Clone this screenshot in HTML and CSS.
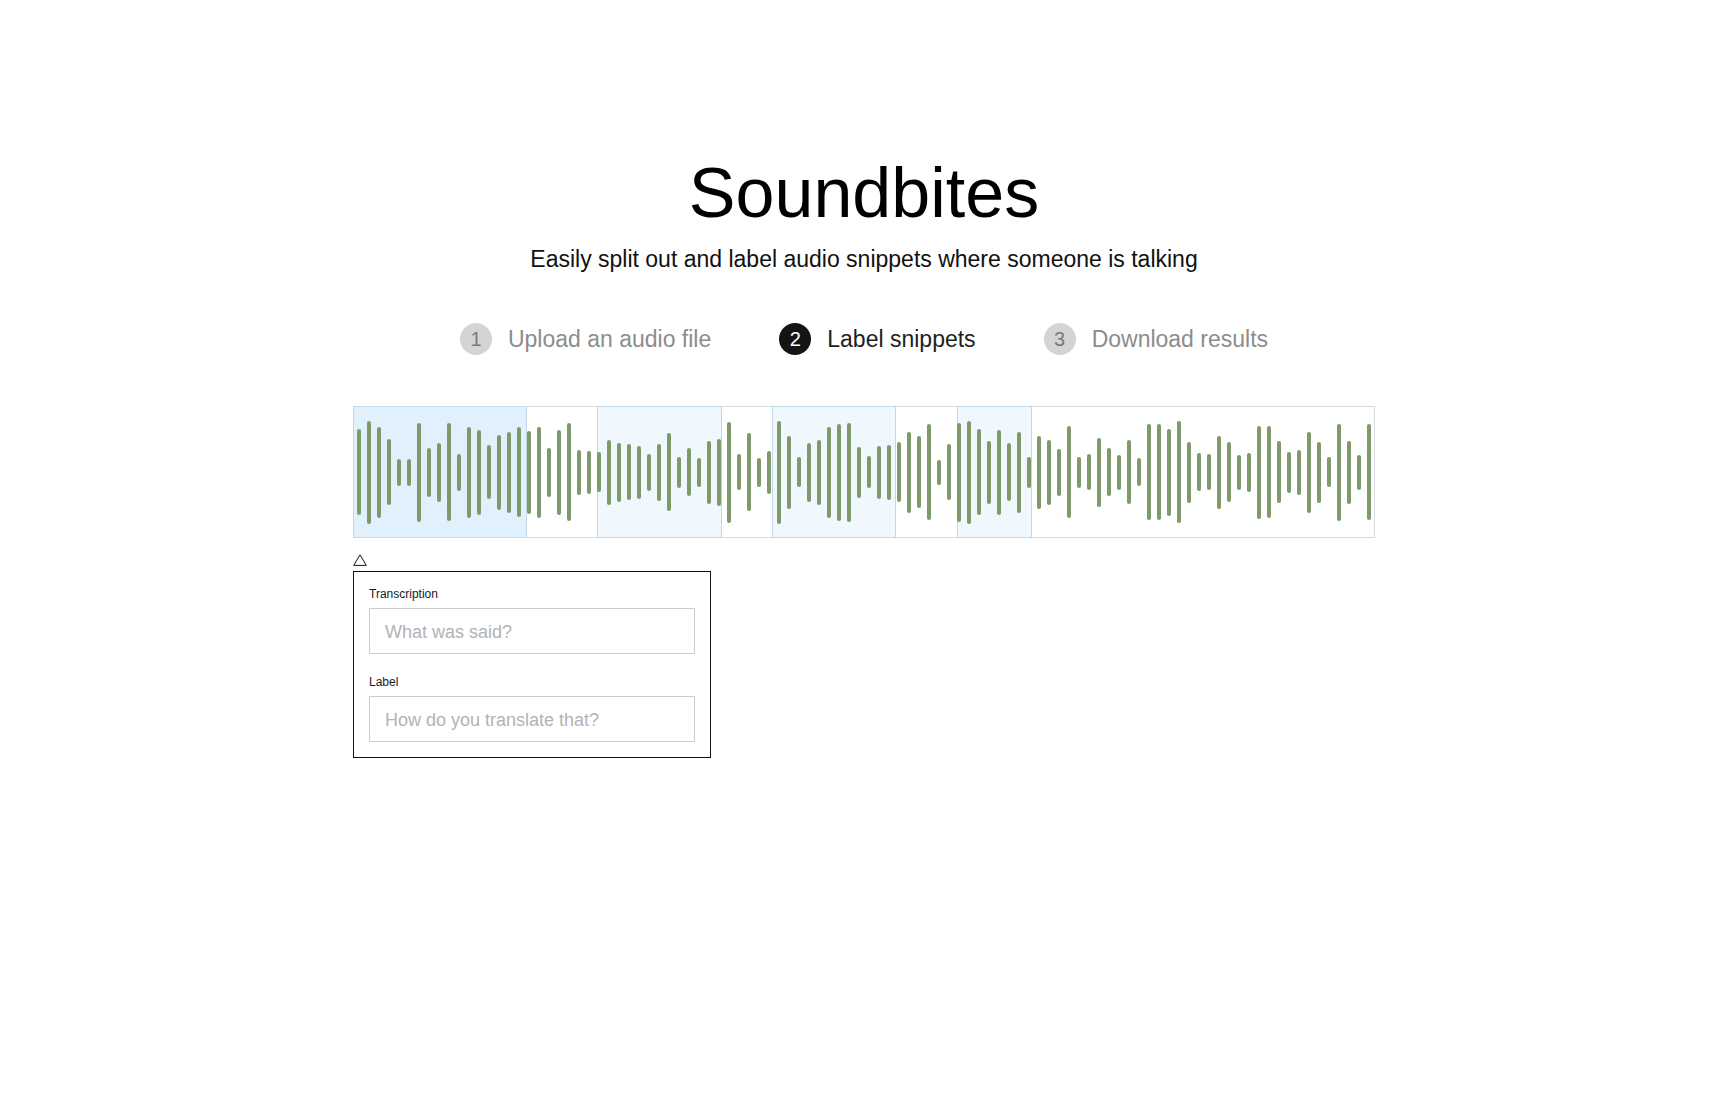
FILE: index.html
```html
<!DOCTYPE html>
<html lang="en">
<head>
<meta charset="utf-8">
<title>Soundbites</title>
<link rel="stylesheet" href="styles.css">
</head>
<body>
<main class="page">
  <header class="hero">
    <h1 class="title">Soundbites</h1>
    <p class="subtitle">Easily split out and label audio snippets where someone is talking</p>
  </header>

  <ol class="steps">
    <li class="step"><span class="step-num">1</span><span class="step-text">Upload an audio file</span></li>
    <li class="step step-active"><span class="step-num">2</span><span class="step-text">Label snippets</span></li>
    <li class="step"><span class="step-num">3</span><span class="step-text">Download results</span></li>
  </ol>

  <section class="editor">
    <div class="wave">
      <div class="region region-selected" style="left:-1px;width:174px"></div>
      <div class="region" style="left:243px;width:125px"></div>
      <div class="region" style="left:418px;width:124px"></div>
      <div class="region" style="left:603px;width:75px"></div>

      <div class="bar" style="height:86px"></div>
      <div class="bar" style="height:103px"></div>
      <div class="bar" style="height:91px"></div>
      <div class="bar" style="height:66px"></div>
      <div class="bar" style="height:27px"></div>
      <div class="bar" style="height:27px"></div>
      <div class="bar" style="height:99px"></div>
      <div class="bar" style="height:49px"></div>
      <div class="bar" style="height:59px"></div>
      <div class="bar" style="height:98px"></div>
      <div class="bar" style="height:37px"></div>
      <div class="bar" style="height:91px"></div>
      <div class="bar" style="height:85px"></div>
      <div class="bar" style="height:54px"></div>
      <div class="bar" style="height:75px"></div>
      <div class="bar" style="height:81px"></div>
      <div class="bar" style="height:90px"></div>
      <div class="bar" style="height:83px"></div>
      <div class="bar" style="height:91px"></div>
      <div class="bar" style="height:49px"></div>
      <div class="bar" style="height:85px"></div>
      <div class="bar" style="height:98px"></div>
      <div class="bar" style="height:45px"></div>
      <div class="bar" style="height:43px"></div>
      <div class="bar" style="height:40px"></div>
      <div class="bar" style="height:65px"></div>
      <div class="bar" style="height:59px"></div>
      <div class="bar" style="height:56px"></div>
      <div class="bar" style="height:53px"></div>
      <div class="bar" style="height:37px"></div>
      <div class="bar" style="height:57px"></div>
      <div class="bar" style="height:78px"></div>
      <div class="bar" style="height:31px"></div>
      <div class="bar" style="height:48px"></div>
      <div class="bar" style="height:29px"></div>
      <div class="bar" style="height:63px"></div>
      <div class="bar" style="height:67px"></div>
      <div class="bar" style="height:101px"></div>
      <div class="bar" style="height:36px"></div>
      <div class="bar" style="height:78px"></div>
      <div class="bar" style="height:29px"></div>
      <div class="bar" style="height:43px"></div>
      <div class="bar" style="height:103px"></div>
      <div class="bar" style="height:73px"></div>
      <div class="bar" style="height:30px"></div>
      <div class="bar" style="height:59px"></div>
      <div class="bar" style="height:65px"></div>
      <div class="bar" style="height:91px"></div>
      <div class="bar" style="height:97px"></div>
      <div class="bar" style="height:99px"></div>
      <div class="bar" style="height:51px"></div>
      <div class="bar" style="height:32px"></div>
      <div class="bar" style="height:53px"></div>
      <div class="bar" style="height:55px"></div>
      <div class="bar" style="height:60px"></div>
      <div class="bar" style="height:81px"></div>
      <div class="bar" style="height:72px"></div>
      <div class="bar" style="height:96px"></div>
      <div class="bar" style="height:25px"></div>
      <div class="bar" style="height:56px"></div>
      <div class="bar" style="height:99px"></div>
      <div class="bar" style="height:103px"></div>
      <div class="bar" style="height:86px"></div>
      <div class="bar" style="height:63px"></div>
      <div class="bar" style="height:85px"></div>
      <div class="bar" style="height:58px"></div>
      <div class="bar" style="height:81px"></div>
      <div class="bar" style="height:31px"></div>
      <div class="bar" style="height:73px"></div>
      <div class="bar" style="height:65px"></div>
      <div class="bar" style="height:47px"></div>
      <div class="bar" style="height:92px"></div>
      <div class="bar" style="height:31px"></div>
      <div class="bar" style="height:36px"></div>
      <div class="bar" style="height:69px"></div>
      <div class="bar" style="height:48px"></div>
      <div class="bar" style="height:35px"></div>
      <div class="bar" style="height:64px"></div>
      <div class="bar" style="height:28px"></div>
      <div class="bar" style="height:96px"></div>
      <div class="bar" style="height:96px"></div>
      <div class="bar" style="height:87px"></div>
      <div class="bar" style="height:102px"></div>
      <div class="bar" style="height:61px"></div>
      <div class="bar" style="height:38px"></div>
      <div class="bar" style="height:36px"></div>
      <div class="bar" style="height:73px"></div>
      <div class="bar" style="height:60px"></div>
      <div class="bar" style="height:35px"></div>
      <div class="bar" style="height:39px"></div>
      <div class="bar" style="height:93px"></div>
      <div class="bar" style="height:92px"></div>
      <div class="bar" style="height:62px"></div>
      <div class="bar" style="height:41px"></div>
      <div class="bar" style="height:45px"></div>
      <div class="bar" style="height:81px"></div>
      <div class="bar" style="height:61px"></div>
      <div class="bar" style="height:30px"></div>
      <div class="bar" style="height:97px"></div>
      <div class="bar" style="height:63px"></div>
      <div class="bar" style="height:35px"></div>
      <div class="bar" style="height:96px"></div>
    </div>

    <div class="marker" aria-hidden="true">
      <svg width="14" height="12" viewBox="0 0 14 12"><polygon points="7,0.8 13.3,11.4 0.7,11.4" fill="none" stroke="#111" stroke-width="1"/></svg>
    </div>

    <form class="snippet-form">
      <label class="field-label" for="transcription">Transcription</label>
      <input class="field-input" id="transcription" type="text" placeholder="What was said?">
      <label class="field-label field-label-second" for="label">Label</label>
      <input class="field-input" id="label" type="text" placeholder="How do you translate that?">
    </form>
  </section>
</main>
</body>
</html>
```

FILE: styles.css
```css
* {
  box-sizing: border-box;
}

html, body {
  margin: 0;
  padding: 0;
  background: #ffffff;
}

body {
  font-family: "Liberation Sans", Arial, Helvetica, sans-serif;
  color: #111111;
}

.page {
  width: 1022px;
  margin: 0 auto;
  padding-top: 153px;
}

.hero {
  text-align: center;
}

.title {
  margin: 0;
  font-size: 70px;
  line-height: 80px;
  font-weight: 400;
  color: #000000;
}

.subtitle {
  margin: 12px 0 0;
  font-size: 23px;
  line-height: 28px;
  color: #111111;
}

.steps {
  list-style: none;
  margin: 50px 0 0;
  padding: 0;
  display: flex;
  justify-content: center;
  gap: 68px;
}

.step {
  display: flex;
  align-items: center;
  gap: 16px;
  height: 32px;
  font-size: 23px;
  color: #8c8c8c;
}

.step-num {
  width: 32px;
  height: 32px;
  border-radius: 50%;
  background: #d4d4d4;
  color: #7a7a7a;
  display: flex;
  align-items: center;
  justify-content: center;
  font-size: 20px;
  line-height: 1;
}

.step-active {
  color: #1e1e1e;
}

.step-active .step-num {
  background: #141414;
  color: #ffffff;
}

.editor {
  margin-top: 51px;
}

.wave {
  position: relative;
  display: flex;
  align-items: center;
  height: 132px;
  border: 1px solid #d7dbde;
}

.region {
  position: absolute;
  top: -1px;
  bottom: -1px;
  border: 1px solid #c3d8e6;
  background: #f0f8fe;
}

.region-selected {
  background: #e0f1fd;
}

.bar {
  position: relative;
  z-index: 1;
  width: 4px;
  margin: 0 3px;
  border-radius: 2px;
  background: #7e9a6b;
  flex: none;
}

.marker {
  margin-top: 16px;
  height: 12px;
  line-height: 0;
}

.snippet-form {
  margin-top: 5px;
  width: 358px;
  border: 1px solid #111111;
  padding: 15px;
  display: flex;
  flex-direction: column;
}

.field-label {
  font-size: 12px;
  line-height: 14px;
  color: #1a1a1a;
  margin-bottom: 7px;
}

.field-label-second {
  margin-top: 21px;
}

.field-input {
  width: 100%;
  height: 46px;
  border: 1px solid #cccccc;
  border-radius: 0;
  padding: 2px 15px 0;
  font-family: "Liberation Sans", Arial, Helvetica, sans-serif;
  font-size: 18px;
  color: #222222;
  background: #ffffff;
  outline: none;
}

.field-input::placeholder {
  color: #b3b3b3;
}
```
